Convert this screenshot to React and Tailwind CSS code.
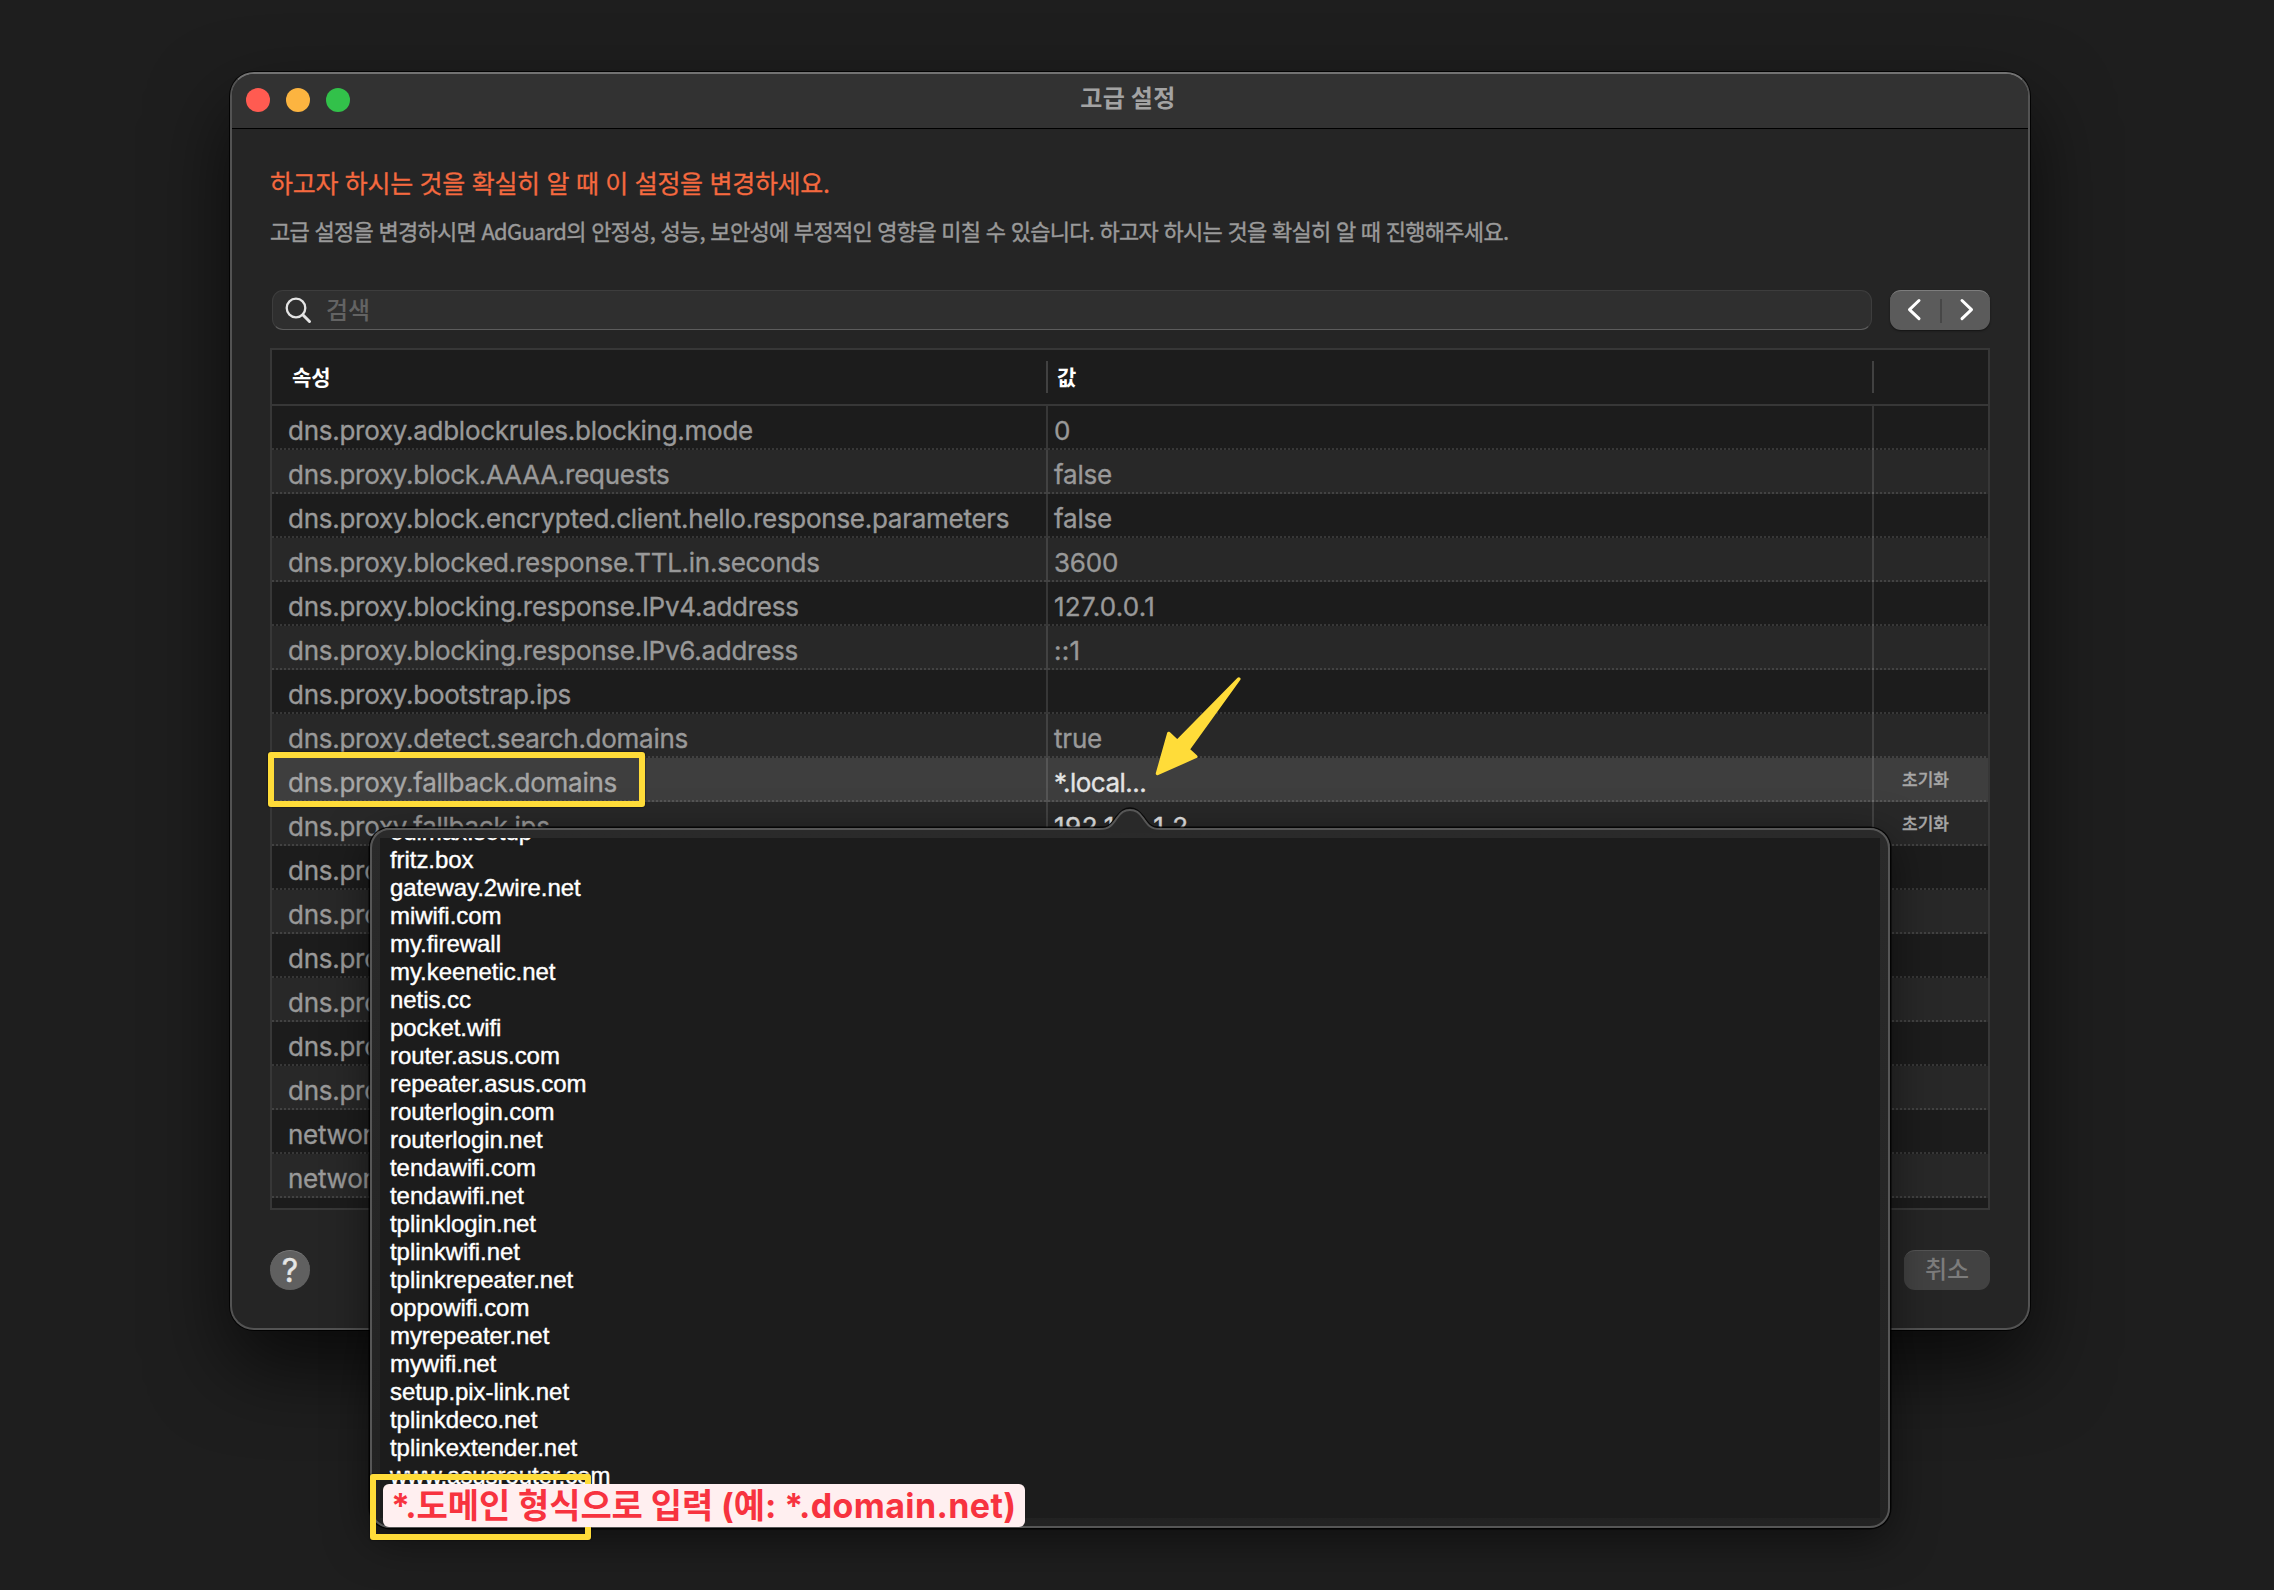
import React from "react";

const rows = [
  { name: "dns.proxy.adblockrules.blocking.mode", value: "0" },
  { name: "dns.proxy.block.AAAA.requests", value: "false" },
  { name: "dns.proxy.block.encrypted.client.hello.response.parameters", value: "false" },
  { name: "dns.proxy.blocked.response.TTL.in.seconds", value: "3600" },
  { name: "dns.proxy.blocking.response.IPv4.address", value: "127.0.0.1" },
  { name: "dns.proxy.blocking.response.IPv6.address", value: "::1" },
  { name: "dns.proxy.bootstrap.ips", value: "" },
  { name: "dns.proxy.detect.search.domains", value: "true" },
  { name: "dns.proxy.fallback.domains", value: "*.local...", changed: true, selected: true },
  { name: "dns.proxy.fallback.ips", value: "192.168.1.2", changed: true },
  { name: "dns.proxy", value: "" },
  { name: "dns.proxy", value: "" },
  { name: "dns.proxy", value: "" },
  { name: "dns.proxy", value: "" },
  { name: "dns.proxy", value: "" },
  { name: "dns.proxy", value: "" },
  { name: "network", value: "" },
  { name: "network", value: "" },
];

const domains = [
  "edimax.setup",
  "fritz.box",
  "gateway.2wire.net",
  "miwifi.com",
  "my.firewall",
  "my.keenetic.net",
  "netis.cc",
  "pocket.wifi",
  "router.asus.com",
  "repeater.asus.com",
  "routerlogin.com",
  "routerlogin.net",
  "tendawifi.com",
  "tendawifi.net",
  "tplinklogin.net",
  "tplinkwifi.net",
  "tplinkrepeater.net",
  "oppowifi.com",
  "myrepeater.net",
  "mywifi.net",
  "setup.pix-link.net",
  "tplinkdeco.net",
  "tplinkextender.net",
  "www.asusrouter.com",
];

const rowBg = (row, i) => {
  if (row.selected) return "bg-[#3e3e3e]";
  return i % 2 ? "bg-[#282828]" : "bg-[#1c1c1c]";
};

const valueTracking = (value) => {
  if (value.startsWith("*")) return "tracking-[-0.5px]";
  if (value.startsWith("192")) return "tracking-[0.5px]";
  return value.includes("1") ? "tracking-[0.25px]" : "tracking-[-0.2px]";
};

const TitleBar = () => (
  <div className="relative h-[55px] shrink-0 flex items-center bg-[#323232] border-b border-black rounded-t-[22px] px-3.5">
    <div className="flex gap-4 -mt-0.5">
      <span className="w-6 h-6 rounded-full bg-[#ff5b51]" />
      <span className="w-6 h-6 rounded-full bg-[#fcb440]" />
      <span className="w-6 h-6 rounded-full bg-[#32c14a]" />
    </div>
    <h1 className="absolute inset-x-0 top-[3px] -ml-1 text-center text-[24px] leading-10 font-bold tracking-[0.3px] text-[#a3a3a3]">
      고급 설정
    </h1>
  </div>
);

const SearchRow = () => (
  <div className="mt-11 ml-0.5 flex gap-[18px]">
    <div className="w-[1600px] h-10 flex items-center rounded-[11px] bg-[#2f2f2f] border border-[#3d3d3d] border-b-[#5c5c5c]">
      <svg className="ml-2.5 w-8 h-8" viewBox="0 0 32 32" fill="none" stroke="#e4e4e4">
        <circle cx="13" cy="14" r="9.3" strokeWidth="2.3" />
        <path d="M19.8 20.8L26.5 27.5" strokeWidth="3" strokeLinecap="round" />
      </svg>
      <span className="ml-[11px] -mt-0.5 text-[24px] leading-9 font-medium text-[#636363]">검색</span>
    </div>
    <div className="w-[100px] h-10 flex items-center rounded-[11px] bg-[#5b5b5b] border-t border-[#7d7d7d] shadow-[0_1px_2px_rgba(0,0,0,0.5)]">
      <svg className="w-[50px] h-[38px]" viewBox="0 0 50 38" fill="none" stroke="#ffffff" strokeWidth="3" strokeLinecap="round" strokeLinejoin="round">
        <path d="M29 8.500L19.500 17.600L29 26.700" />
      </svg>
      <span className="w-0.5 h-6 shrink-0 bg-[#474747]" />
      <svg className="w-12 h-[38px]" viewBox="0 0 48 38" fill="none" stroke="#ffffff" strokeWidth="3" strokeLinecap="round" strokeLinejoin="round">
        <path d="M20 8.500L29.500 17.600L20 26.700" />
      </svg>
    </div>
  </div>
);

const SettingRow = ({ row, i }) => (
  <div className={`relative h-11 flex ${rowBg(row, i)} ${row.selected ? "text-[#a6a6a6]" : "text-[#999999]"}`}>
    <div className="w-[776px] pl-4 pt-1 leading-[42px] border-r-2 border-white/12 tracking-[-0.27px] whitespace-nowrap">
      {row.name}
    </div>
    <div
      className={`w-[826px] pl-1.5 pt-1 leading-[42px] border-r-2 border-white/12 ${valueTracking(row.value)} ${
        row.changed ? "text-[#e4e4e4]" : ""
      }`}
    >
      {row.value}
    </div>
    {row.changed && (
      <div className="pl-7 text-[17px] leading-[44px] font-medium text-[#a6a6a6]">초기화</div>
    )}
    <span className="absolute inset-x-0 bottom-0 h-0.5 bg-[repeating-linear-gradient(90deg,rgba(255,255,255,0.12)_0_2px,transparent_2px_4px)]" />
  </div>
);

const SettingsTable = () => (
  <div className="mt-[18px] h-[862px] border-2 border-[#373737] bg-[#1c1c1c]">
    <div className="h-14 flex items-center border-b-2 border-[#373737] text-[21px] font-bold text-white">
      <div className="w-[776px] h-8 pl-5 leading-[30px] border-r-2 border-[#414141]">속성</div>
      <div className="w-[826px] h-8 pl-[9px] leading-[30px] border-r-2 border-[#414141]">값</div>
    </div>
    <div className="text-[26px] font-['Inter','Noto_Sans_CJK_KR',sans-serif] [-webkit-text-stroke:0.35px_currentColor]">
      {rows.map((row, i) => (
        <SettingRow key={i} row={row} i={i} />
      ))}
    </div>
  </div>
);

const DomainsPopover = () => (
  <div className="absolute left-[370px] top-[828px] w-[1520px] h-[700px] p-2 rounded-[20px] border-2 border-[#565656] bg-linear-to-b from-[#2a2a2a] to-[#222222] shadow-[0_0_0_1.5px_rgba(0,0,0,0.85),0_12px_44px_rgba(0,0,0,0.5)]">
    <svg className="absolute left-[724px] top-[-23px] w-[68px] h-[26px]" viewBox="0 0 68 26">
      <path d="M4 26V22C14 22 17 17 21 11C25 5.500 28 2.500 34 2.500C40 2.500 43 5.500 47 11C51 17 54 22 64 22V26Z" fill="#292929" />
      <path d="M4 20.500C13 20.500 16 16 20 10C24 4.500 28 1 34 1C40 1 44 4.500 48 10C52 16 55 20.500 64 20.500" fill="none" stroke="#0a0a0a" strokeWidth="1.500" />
      <path d="M4 22C14 22 17 17 21 11C25 5.500 28 3 34 3C40 3 43 5.500 47 11C51 17 54 22 64 22" fill="none" stroke="#565656" strokeWidth="2" />
    </svg>
    <div className="h-[680px] overflow-hidden bg-[#1c1c1c]">
      <ul className="-mt-5 pl-2.5 font-['Liberation_Sans',Arial,sans-serif] text-[24px] leading-7 tracking-[-0.06px] text-white [-webkit-text-stroke:0.4px_white]">
        {domains.map((domain) => (
          <li key={domain}>{domain}</li>
        ))}
      </ul>
    </div>
  </div>
);

export default function App() {
  return (
    <div className="relative w-[2274px] h-[1590px] overflow-hidden bg-[#1e1e1e] pt-[72px] pl-[230px] font-['Noto_Sans_CJK_KR',sans-serif]">
      <div className="w-[1800px] h-[1258px] flex flex-col rounded-[24px] border-2 border-[#535353] border-t-[#727272] bg-[#252525] shadow-[0_0_0_1px_rgba(0,0,0,0.85),0_36px_80px_rgba(0,0,0,0.65)]">
        <TitleBar />
        <div className="px-[38px] pt-[35px]">
          <p className="text-[25px] leading-9 tracking-[-0.3px] [word-spacing:1.4px] text-[#f5693f] [-webkit-text-stroke:0.3px_currentColor]">
            하고자 하시는 것을 확실히 알 때 이 설정을 변경하세요.
          </p>
          <p className="mt-3.5 text-[22px] leading-8 tracking-[-0.72px] [word-spacing:1.2px] whitespace-nowrap text-[#9a9a9a] [-webkit-text-stroke:0.4px_currentColor]">
            고급 설정을 변경하시면 AdGuard의 안정성, 성능, 보안성에 부정적인 영향을 미칠 수 있습니다. 하고자 하시는 것을 확실히 알 때 진행해주세요.
          </p>
          <SearchRow />
          <SettingsTable />
          <div className="mt-10 flex justify-between">
            <button className="w-10 h-10 rounded-full bg-[#606060] border-t border-[#7a7a7a] font-['Inter',sans-serif] text-[32px] leading-[38px] text-[#e6e6e6] [-webkit-text-stroke:0.4px_currentColor]">
              ?
            </button>
            <button className="w-[86px] h-10 rounded-[11px] bg-[#424242] border-t border-[#555555] text-[24px] leading-[33px] pb-1.5 font-medium text-[#7c7c7c]">
              취소
            </button>
          </div>
        </div>
      </div>

      <DomainsPopover />

      {/* highlights */}
      <div className="absolute left-[268px] top-[752px] w-[377px] h-[55px] rounded-[3px] border-6 border-[#ffdc39] shadow-[0_0_1px_1px_rgba(0,0,0,0.25)]" />
      <svg className="absolute left-[1150px] top-[672px] w-[96px] h-[108px]" viewBox="0 0 96 108">
        <path
          d="M7.500 101.500L18.800 61.500L27.300 69.500L88.800 7L38 77.500L45.700 84.500Z"
          fill="#ffdc39"
          stroke="#ffdc39"
          strokeWidth="3.500"
          strokeLinejoin="round"
        />
      </svg>
      <div className="absolute left-[370px] top-[1474px] w-[221px] h-[66px] rounded-[3px] border-6 border-[#ffdc39] shadow-[0_0_1px_1px_rgba(0,0,0,0.25)]" />
      <div className="absolute left-[383px] top-[1484px] w-[642px] h-[43px] pl-2 rounded-md bg-[#ffeff0] font-['Inter','Noto_Sans_CJK_KR',sans-serif] text-[34px] leading-[43px] font-bold whitespace-nowrap text-[#f7333f]">
        <span className="tracking-[-0.1px]">*.도메인 형식으로 입력 (예: </span>
        <span className="tracking-[0.4px]">*.domain.net)</span>
      </div>
    </div>
  );
}
